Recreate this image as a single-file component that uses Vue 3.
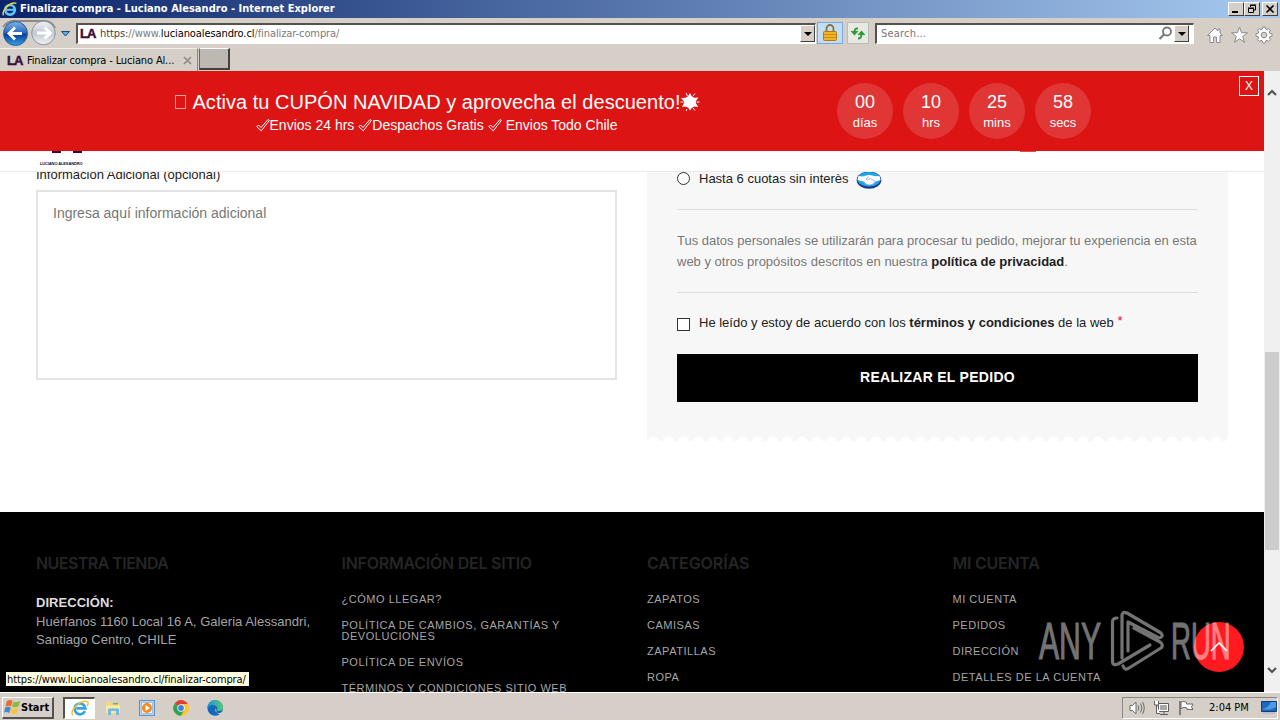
<template>
  <div class="desktop">
    <div class="titlebar">
      <svg class="ie-icon" viewBox="0 0 20 20" width="16" height="16">
        <circle cx="10" cy="11" r="6" fill="none" stroke="#5fc3f5" stroke-width="3.4" />
        <path d="M5 11h11" stroke="#5fc3f5" stroke-width="2.6" />
        <path d="M2 18C-1 13 10 0 18 3" fill="none" stroke="#f5cf3a" stroke-width="1.8" />
      </svg>
      <span class="title">Finalizar compra - Luciano Alesandro - Internet Explorer</span>
      <div class="win-buttons">
        <span class="win-btn">
          <svg width="12" height="10" viewBox="0 0 12 10"><path d="M2 8h6" stroke="#000" stroke-width="2" /></svg>
        </span>
        <span class="win-btn">
          <svg width="12" height="10" viewBox="0 0 12 10">
            <path d="M4.5 3V1.5h5V6H8M4 1h6M2.500 4.500h5V8.500h-5zM2 4h6" fill="none" stroke="#000" />
          </svg>
        </span>
        <span class="win-btn close">
          <svg width="12" height="10" viewBox="0 0 12 10">
            <path d="M2.500 1.500l7 7M9.500 1.500l-7 7" stroke="#000" stroke-width="1.600" />
          </svg>
        </span>
      </div>
    </div>

    <div class="addressbar">
      <svg class="nav-btns" width="76" height="30" viewBox="0 0 76 30">
        <defs>
          <linearGradient id="back" x1="0" y1="0" x2="0" y2="1">
            <stop offset="0" stop-color="#7db4e4" />
            <stop offset=".45" stop-color="#2c6cc0" />
            <stop offset=".55" stop-color="#0c3f95" />
            <stop offset="1" stop-color="#2fa5ec" />
          </linearGradient>
          <linearGradient id="fwd" x1="0" y1="0" x2="0" y2="1">
            <stop offset="0" stop-color="#f4f4f4" />
            <stop offset=".5" stop-color="#c3c8d0" />
            <stop offset="1" stop-color="#eef1f4" />
          </linearGradient>
        </defs>
        <path d="M3 9Q8 2 17 3H44Q52 3 55 10" fill="none" stroke="#8b8b8b" stroke-width="2" />
        <circle cx="43.500" cy="15" r="11.800" fill="url(#fwd)" stroke="#8e959e" />
        <circle cx="15.500" cy="15.500" r="12" fill="url(#back)" stroke="#2e5d9b" />
        <path d="M22 15.500H9.500M15 9.500l-6 6 6 6" fill="none" stroke="#fff" stroke-width="2.800" />
        <path d="M37 15h13M44.500 9.500l6 5.500-6 5.500" fill="none" stroke="#fff" stroke-width="2.800" />
        <path d="M61.500 13.500h8l-4 4.500z" fill="#58b0e8" stroke="#164a80" />
      </svg>
      <div class="url-box">
        <span class="la-icon">LA</span>
        <span class="url"><i class="dark">https:</i>//www.<b>lucianoalesandro.cl</b>/finalizar-compra/</span>
        <span class="drop"><i class="tri"></i></span>
      </div>
      <div class="tool lock">
        <svg width="16" height="18" viewBox="0 0 16 18">
          <path d="M4.500 8V4.500a3.500 3.500 0 0 1 7 0V8" fill="none" stroke="#8a7434" stroke-width="1.800" />
          <rect x="1.500" y="7.500" width="13" height="9" rx="1" fill="#f0b521" stroke="#b07b12" />
          <path d="M2 10.500h12M2 13.500h12" stroke="#c98e15" />
        </svg>
      </div>
      <div class="tool refresh">
        <svg width="16" height="16" viewBox="0 0 16 16">
          <path d="M8 3.500Q4.500 3 4.500 7" fill="none" stroke="#2f9a3c" stroke-width="2" />
          <path d="M.5 6h8l-4 4.500z" fill="#2f9a3c" />
          <path d="M8 13.500Q11.500 13.500 11.500 9" fill="none" stroke="#2f9a3c" stroke-width="2" />
          <path d="M7.500 10h8l-4-4.500z" fill="#2f9a3c" />
        </svg>
      </div>
      <div class="search-box">
        <span class="search-text">Search...</span>
        <svg width="15" height="15" viewBox="0 0 15 15">
          <circle cx="9" cy="5.500" r="4" fill="none" stroke="#777" stroke-width="1.800" />
          <path d="M6 8.500L1.500 13" stroke="#777" stroke-width="2.200" />
        </svg>
        <span class="drop"><i class="tri"></i></span>
      </div>
      <svg class="cmd-icons" width="70" height="20" viewBox="0 0 70 20">
        <g fill="#fff" stroke="#8c8c8c" stroke-linejoin="round">
          <path d="M9 3L1.500 10.500h2.500V17.500h3.500V12h3v5.500H14V10.500h2.500L14 8V4h-2v2z" />
          <path d="M33.500 2l2 5.700 6 .1-4.800 3.600 1.800 5.900-5-3.500-5 3.500 1.800-5.900-4.800-3.600 6-.1z" />
          <path
            d="M56.800 2h2.400l.4 2.100 1.400.6 1.800-1.200 1.700 1.700-1.200 1.800.6 1.400 2.100.4v2.400l-2.100.4-.6 1.400 1.200 1.800-1.700 1.700-1.800-1.200-1.400.6-.4 2.100h-2.400l-.4-2.100-1.400-.6-1.800 1.200-1.700-1.700 1.200-1.800-.6-1.400-2.100-.4V8.800l2.100-.4.6-1.400-1.200-1.800 1.700-1.700L55 4.700l1.400-.6z"
          />
          <circle cx="58" cy="10" r="2.800" fill="#d6d0c8" />
        </g>
      </svg>
    </div>

    <div class="tabs">
      <div class="tab">
        <span class="la-icon">LA</span>
        <span class="tab-title">Finalizar compra - Luciano Al...</span>
        <svg width="9" height="9" viewBox="0 0 9 9"><path d="M1 1l7 7M8 1L1 8" stroke="#8f8b85" stroke-width="1.700" /></svg>
      </div>
      <div class="new-tab"></div>
    </div>

    <div class="viewport">
      <div class="page">
        <div class="promo">
          <div class="promo-text">
            <div class="promo-title">
              <i class="tofu"></i>
              <span>Activa tu CUPÓN NAVIDAD y aprovecha el descuento!</span>
              <svg width="20" height="20" viewBox="0 0 20 20">
                <path
                  d="M10 1l2.600 5 5.900-.6-3.300 4.500 3 5-5.200-.6L10 18.500l-2.800-4.300-5.200.8 2.500-5L1 6l6-.2z"
                  fill="#fff"
                />
                <circle cx="10" cy="10" r="6" fill="#fff" />
                <path d="M6 1l1.500 3M15 1.500L13 4M.5 10h3M19.500 10h-3M6 19l1-2M15 18.500L13 16" stroke="#fff" />
              </svg>
            </div>
            <div class="promo-sub">
              <template v-for="(perk, i) in perks" :key="perk">
                <svg class="check" width="14" height="14" viewBox="0 0 14 14">
                  <path d="M.8 8.800L2.500 7 5 9.500 12 1.500l1.400.9L5.300 12.800z" fill="none" stroke="#fff" />
                </svg>
                <span :class="{ last: i === 2 }">{{ perk }}</span>
              </template>
            </div>
          </div>
          <div class="countdown">
            <div v-for="c in countdown" :key="c.unit" class="count">
              <span class="num">{{ c.value }}</span>
              <span class="unit">{{ c.unit }}</span>
            </div>
          </div>
          <span class="promo-close">X</span>
        </div>

        <div class="site-header">
          <div class="brand">
            <svg width="32" height="3" viewBox="0 0 32 3">
              <path d="M0 0h9v2H0zM21 0h9v2h-9z" fill="#360a33" />
            </svg>
            <span>LUCIANO ALESANDRO</span>
          </div>
          <i class="cart-dot"></i>
        </div>

        <div class="content">
          <div class="checkout">
            <div class="info">
              <label>Informacion Adicional (opcional)</label>
              <div class="textarea">Ingresa aquí información adicional</div>
            </div>
            <div class="order">
              <div class="order-box">
                <div class="pay">
                  <i class="radio"></i>
                  <span class="pay-label">Hasta 6 cuotas sin interès</span>
                  <svg width="26" height="18" viewBox="0 0 26 18">
                    <ellipse cx="13" cy="9.200" rx="12.300" ry="8.600" fill="#1e3c88" />
                    <ellipse cx="13" cy="8.300" rx="11.500" ry="7.300" fill="#20a7ea" />
                    <path d="M2.500 5Q7 6 10 4.500q3-1 6 0 4 1 7.500.5l1 4-5 1.500q-2 3.500-6 3.500t-6-3.500L1.600 9z" fill="#fff" />
                    <path d="M8 11q2.500 3 5.500 3 4 0 5.500-3.500l-4.500-3-3 1.500-1.500-1 3-2.500" fill="none" stroke="#8c98c8" stroke-width=".7" />
                  </svg>
                </div>
                <p class="privacy">
                  <span>Tus datos personales se utilizarán para procesar tu pedido, mejorar tu experiencia en esta</span><br />
                  <span>web y otros propósitos descritos en nuestra <b>política de privacidad</b>.</span>
                </p>
                <div class="terms">
                  <i class="checkbox"></i>
                  <span>He leído y estoy de acuerdo con los <b>términos y condiciones</b> de la web <em>*</em></span>
                </div>
                <button class="place-order">REALIZAR EL PEDIDO</button>
              </div>
              <div class="scallop"></div>
            </div>
          </div>

          <footer class="footer">
            <div class="col">
              <h5>NUESTRA TIENDA</h5>
              <p class="address"><b>DIRECCIÓN:</b><br />Huérfanos 1160 Local 16 A, Galeria Alessandri,<br />Santiago Centro, CHILE</p>
            </div>
            <div v-for="col in footerCols" :key="col.title" class="col">
              <h5>{{ col.title }}</h5>
              <ul>
                <li v-for="link in col.links" :key="link">{{ link }}</li>
              </ul>
            </div>
          </footer>
        </div>

        <span class="to-top"></span>
        <svg class="to-top-arrow" width="20" height="14" viewBox="0 0 20 14">
          <path d="M2 11L10 3l8 8" fill="none" stroke="#fff" stroke-width="1.700" />
        </svg>
        <div class="watermark">
          <span class="wm-text">ANY</span>
          <svg width="56" height="62" viewBox="0 0 56 62">
            <g fill="none" stroke="#fff" stroke-width="3.200" stroke-linejoin="round" stroke-linecap="round">
              <path d="M7 8Q2.500 8 2.500 12V52Q3 56 8 54L40 35" />
              <path d="M12 48V5Q13 1 17 3L51 23Q54 27 49 28L18 12V41" />
              <path d="M13 56Q15 61 19 58L51 38Q54 35 50 32L24 18" />
            </g>
          </svg>
          <span class="wm-text run">RUN</span>
        </div>
        <div class="status">https://www.lucianoalesandro.cl/finalizar-compra/</div>
      </div>

      <div class="scrollbar">
        <svg width="16" height="16" viewBox="0 0 16 16"><path d="M4 10l4-4 4 4" fill="none" stroke="#555" stroke-width="2.200" /></svg>
        <div class="thumb"></div>
        <svg width="16" height="16" viewBox="0 0 16 16"><path d="M4 6l4 4 4-4" fill="none" stroke="#555" stroke-width="2.200" /></svg>
      </div>
    </div>

    <div class="taskbar">
      <div class="start">
        <svg width="17" height="16" viewBox="0 0 17 16">
          <path d="M3 2Q6 0 8.500 2L7 7.500Q4.500 6 1.500 7.500z" fill="#ee6a2c" />
          <path d="M9.500 2.500Q12 4 16 2L14.500 7.500Q11 9 8 7.500z" fill="#86bb40" />
          <path d="M1.300 8.500Q4 7 6.800 8.500L5.300 14Q3 12.500 0 13.500z" fill="#4a86d0" />
          <path d="M7.800 9Q10.500 10.500 14.200 9L12.800 14.200Q9.500 15.500 6.300 14z" fill="#f7c633" />
        </svg>
        <span>Start</span>
      </div>
      <div class="task active">
        <svg width="18" height="18" viewBox="0 0 20 20">
          <path d="M15.500 13.500A6 6 0 1 1 16 10.500H6" fill="none" stroke="#3ba2e0" stroke-width="3" />
          <path d="M2 18C-2 13 11 0 18 3q2 1 0 5" fill="none" stroke="#f2c13a" stroke-width="1.600" />
        </svg>
      </div>
      <div class="task">
        <svg width="16" height="16" viewBox="0 0 16 16">
          <path d="M1 2h5l1 1.500h7V14H1z" fill="#f3d77c" />
          <path d="M1 5.500h14V13H1z" fill="#f9e9a8" />
          <path d="M3 15V9.500q0-1 1-1h9q1 0 1 1V15h-3v-4H6v4z" fill="#6fbbe3" />
          <path d="M8 3h5v1.500H8z" fill="#62b56d" />
        </svg>
      </div>
      <div class="task">
        <svg width="16" height="16" viewBox="0 0 16 16">
          <rect x=".5" y=".5" width="15" height="15" fill="#b7d5f0" stroke="#5d92c4" />
          <rect x="2.500" y="2.500" width="11" height="11" fill="#f5f8fb" stroke="#7aa6cf" stroke-width=".6" />
          <circle cx="8" cy="8" r="5" fill="#f28a1e" />
          <path d="M6.500 5v6l4.500-3z" fill="#fff" />
        </svg>
      </div>
      <div class="task">
        <svg width="16" height="16" viewBox="0 0 16 16">
          <path d="M8 8L1.300 4A7.800 7.800 0 0 1 14.800 4z" fill="#e2402f" />
          <path d="M8 8L1.300 4A7.800 7.800 0 0 0 8 15.800L11.500 10z" fill="#2da44e" />
          <path d="M8 8V4h6.800A7.800 7.800 0 0 1 8 15.800L11.500 10z" fill="#fbc82c" />
          <circle cx="8" cy="8" r="3.700" fill="#fff" />
          <circle cx="8" cy="8" r="2.900" fill="#3f7fe8" />
        </svg>
      </div>
      <div class="task">
        <svg width="17" height="16" viewBox="0 0 17 16">
          <defs>
            <linearGradient id="edge" x1="0" y1="0" x2="1" y2="0">
              <stop offset="0" stop-color="#1e8fdd" />
              <stop offset="1" stop-color="#54ce6c" />
            </linearGradient>
          </defs>
          <circle cx="8.200" cy="8" r="7.800" fill="#1467bb" />
          <path d="M.4 8A7.800 7.800 0 0 1 16 7.500Q16 11 12 11q-2.500 0-2-1.500 1-2-1-3.500Q4 3 .4 8z" fill="url(#edge)" />
          <path d="M9 8q-2 4 2 5 3 .5 4.500-1.500L17 13l-3 1q-5 1-5-6z" fill="#d6d0c8" />
        </svg>
      </div>
      <div class="tray">
        <svg width="16" height="16" viewBox="0 0 16 16" fill="none" stroke="#6b6b6b">
          <path d="M1 5.500h2.500L7 2v12l-3.500-3.500H1z" fill="#fff" />
          <path d="M9 5.500q1.500 2.500 0 5M11.500 3.500q3 4.500 0 9M13.500 2q3.500 6 0 12" />
        </svg>
        <svg width="17" height="16" viewBox="0 0 17 16" fill="none" stroke="#5e5e5e">
          <path d="M5.500 3.500h10v8h-10zM7 14.500h8M11 12v2" fill="#fff" />
          <rect x="7" y="5" width="7" height="5" fill="#a8a8a8" stroke="none" />
          <path d="M1.500 1v4h4V1M3.500 5v8.500H7" fill="#fff" />
        </svg>
        <svg width="17" height="16" viewBox="0 0 17 16">
          <path d="M2 1v14" stroke="#6b6b6b" stroke-width="1.600" />
          <path d="M3 2q3-1.500 5.500.5V4H15l-1.500 3L15 9.500H9V8Q6 6.500 3 8.500z" fill="#fff" stroke="#6b6b6b" />
        </svg>
        <span class="clock">2:04 PM</span>
        <svg width="16" height="13" viewBox="0 0 16 13">
          <path d="M.5.500h15v10H.5z" fill="#2267be" stroke="#113f7d" />
          <path d="M1 8Q7 7 10 1h5v5Q9 10 1 8z" fill="#4d9be6" />
          <path d="M2 12h12" stroke="#9fb3ca" />
        </svg>
      </div>
    </div>
  </div>
</template>

<script setup>
const perks = ['Envios 24 hrs', 'Despachos Gratis', 'Envios Todo Chile'];

const countdown = [
  { value: '00', unit: 'días' },
  { value: '10', unit: 'hrs' },
  { value: '25', unit: 'mins' },
  { value: '58', unit: 'secs' },
];

const footerCols = [
  {
    title: 'INFORMACIÓN DEL SITIO',
    links: [
      '¿CÓMO LLEGAR?',
      'POLÍTICA DE CAMBIOS, GARANTÍAS Y DEVOLUCIONES',
      'POLÍTICA DE ENVÍOS',
      'TÉRMINOS Y CONDICIONES SITIO WEB',
    ],
  },
  { title: 'CATEGORÍAS', links: ['ZAPATOS', 'CAMISAS', 'ZAPATILLAS', 'ROPA'] },
  { title: 'MI CUENTA', links: ['MI CUENTA', 'PEDIDOS', 'DIRECCIÓN', 'DETALLES DE LA CUENTA'] },
];
</script>

<style>
body {
  overflow: hidden;
}
</style>

<style scoped>
* {
  box-sizing: border-box;
}
svg {
  flex: none;
  display: block;
}
i,
em {
  font-style: normal;
}
.desktop {
  width: 1280px;
  height: 720px;
  display: flex;
  flex-direction: column;
  overflow: hidden;
  background: #d5cfc7;
  color: #000;
  font-family: 'DejaVu Sans Condensed', 'DejaVu Sans', sans-serif;
  font-size: 11px;
  white-space: nowrap;
}

/* window chrome */
.titlebar {
  height: 18px;
  flex: none;
  display: flex;
  align-items: center;
  padding: 0 2px;
  background: linear-gradient(90deg, #0a246a, #a6caf0);
  color: #fff;
}
.title {
  flex: 1;
  margin-left: 2px;
  font-weight: bold;
  font-size: 11px;
  line-height: 18px;
  letter-spacing: 0.02px;
}
.win-buttons {
  display: flex;
}
.win-btn {
  width: 16px;
  height: 14px;
  display: flex;
  align-items: center;
  justify-content: center;
  background: #d5cfc7;
  border: 1px solid;
  border-color: #fff #404040 #404040 #fff;
}
.win-btn.close {
  margin-left: 2px;
}
.addressbar {
  height: 30px;
  flex: none;
  display: flex;
  align-items: center;
}
.url-box,
.search-box {
  height: 21px;
  display: flex;
  align-items: center;
  background: #fff;
  border: 1px solid;
  border-width: 2px 1px 1px 2px;
  border-color: #55524e #fff #fff #55524e;
}
.url-box {
  width: 740px;
  padding-left: 2px;
}
.la-icon {
  width: 16px;
  color: #3b0e3b;
  font-family: 'Liberation Sans', Arial, sans-serif;
  font-weight: bold;
  font-size: 13px;
  letter-spacing: -1px;
  -webkit-text-stroke: 0.5px #3b0e3b;
}
.url {
  flex: 1;
  margin-left: 4px;
  color: #7b7b7b;
  letter-spacing: -0.09px;
}
.url b {
  color: #000;
  font-weight: normal;
}
.dark {
  color: #444;
}
.drop {
  width: 15px;
  height: 17px;
  display: flex;
  align-items: center;
  justify-content: center;
  background: #d5cfc7;
  border: 1px solid;
  border-color: #fff #404040 #404040 #fff;
}
.tri {
  border: 4px solid transparent;
  border-top-color: #000;
  border-bottom: 0;
}
.tool {
  display: flex;
  align-items: center;
  justify-content: center;
  height: 22px;
}
.lock {
  width: 26px;
  margin-left: 1px;
  background: #c3dcf7;
  border: 1px solid #7aa9e0;
}
.refresh {
  width: 22px;
  margin-left: 4px;
  background: #e9e9e4;
  border: 1px solid #b9bcb8;
}
.search-box {
  width: 319px;
  margin-left: 6px;
  padding: 0 4px 0 4px;
}
.search-text {
  flex: 1;
  color: #767676;
  letter-spacing: 0.2px;
}
.search-box .drop {
  margin-left: 1px;
}
.cmd-icons {
  margin: 4px 0 0 12px;
}
.tabs {
  height: 23px;
  flex: none;
  display: flex;
}
.tab {
  width: 198px;
  display: flex;
  align-items: center;
  padding-left: 7px;
  border-top: 1px solid #f3f0ec;
  border-right: 1px solid #8c877f;
}
.tab-title {
  width: 156px;
  margin-left: 4px;
  letter-spacing: -0.14px;
}
.new-tab {
  width: 31px;
  height: 22px;
  margin-left: 1px;
  background: #bdb8b1;
  border: 1px solid;
  border-width: 1px 2px 2px 1px;
  border-color: #fff #45423e #45423e #6a665f;
}

/* web page */
.viewport {
  height: 621px;
  flex: none;
  display: flex;
  background: #fff;
}
.page {
  position: relative;
  width: 1264px;
  overflow: hidden;
  display: flex;
  flex-direction: column;
  font-family: 'Liberation Sans', Arial, sans-serif;
}
.promo {
  position: relative;
  height: 80px;
  flex: none;
  display: flex;
  align-items: center;
  background: #dd1414;
  color: #fff;
}
.promo-text {
  width: 837px;
  padding: 3px 0 0 38px;
}
.promo-title {
  display: flex;
  align-items: center;
  justify-content: center;
  height: 24px;
  padding-top: 1px;
  font-size: 20px;
  letter-spacing: 0.03px;
}
.tofu {
  width: 11px;
  height: 14px;
  margin-right: 7px;
  border: 1px solid #f2a0a0;
}
.promo-sub {
  display: flex;
  align-items: center;
  justify-content: center;
  height: 22px;
  padding-right: 2px;
  font-size: 14px;
}
.promo-sub span {
  margin-right: 4px;
}
.promo-sub .last {
  margin: 0 0 0 4px;
}
.countdown {
  display: flex;
  gap: 10px;
}
.count {
  width: 56px;
  height: 56px;
  display: flex;
  flex-direction: column;
  align-items: center;
  border-radius: 50%;
  background: #e03636;
}
.num {
  margin-top: 8px;
  font-size: 18px;
  line-height: 22px;
}
.unit {
  font-size: 13px;
  line-height: 20px;
}
.promo-close {
  position: absolute;
  top: 5px;
  right: 5px;
  width: 20px;
  height: 20px;
  border: 1px solid #fff;
  font-size: 12px;
  line-height: 18px;
  text-align: center;
}
.site-header {
  height: 21px;
  flex: none;
  display: flex;
  justify-content: space-between;
  border-bottom: 1px solid #e9e9e9;
}
.brand {
  margin-left: 40px;
  width: 43px;
  color: #1d0a1c;
}
.brand svg {
  margin-left: 12px;
}
.brand span {
  display: block;
  margin-top: 7px;
  font-size: 4px;
  font-weight: bold;
  line-height: 5px;
  letter-spacing: -0.12px;
}
.cart-dot {
  width: 16px;
  height: 1px;
  margin-right: 228px;
  background: #df4a4a;
}
.content {
  flex: 1;
  min-height: 0;
  overflow: hidden;
}
.checkout {
  height: 340px;
  display: flex;
  gap: 30px;
  padding: 0 36px;
}
.info,
.order {
  width: 581px;
}
.info label {
  display: block;
  margin-top: -7px;
  font-size: 13px;
  line-height: 20px;
  color: #222;
}
.textarea {
  height: 190px;
  margin-top: 5px;
  padding: 11px 15px;
  border: 2px solid #e4e4e4;
  color: #777;
  font-size: 14px;
  line-height: 20px;
}
.order-box {
  height: 264px;
  padding: 0 30px;
  background: #f7f7f7;
  color: #777;
  font-size: 13px;
}
.pay {
  height: 38px;
  display: flex;
  align-items: flex-start;
  border-bottom: 1px solid #dedede;
  color: #222;
}
.radio {
  width: 13px;
  height: 13px;
  border: 1px solid #333;
  border-radius: 50%;
  background: #fff;
}
.pay-label {
  width: 157px;
  margin-left: 9px;
  line-height: 14px;
}
.pay svg {
  margin-top: -1px;
}
.privacy {
  height: 83px;
  margin: 0;
  padding-top: 20px;
  border-bottom: 1px solid #dedede;
  line-height: 21px;
}
.privacy b,
.terms b {
  color: #222;
}
.terms {
  display: flex;
  margin-top: 19px;
  color: #222;
  line-height: 21px;
}
.checkbox {
  width: 13px;
  height: 13px;
  margin: 6px 9px 0 0;
  border: 1px solid #333;
  background: #fff;
}
.terms em {
  position: relative;
  top: -2px;
  color: #e01020;
}
.place-order {
  display: block;
  width: 521px;
  height: 48px;
  margin-top: 21px;
  padding: 0 0 2px;
  border: 0;
  background: #000;
  color: #fff;
  font-family: inherit;
  font-size: 14px;
  font-weight: bold;
  letter-spacing: 0.28px;
}
.scallop {
  height: 5px;
  background: radial-gradient(circle at 7px 6px, #fff 5px, #f7f7f7 6px) 0 0 / 14.8px 5px;
}
.footer {
  height: 200px;
  display: grid;
  grid-template-columns: repeat(4, 275.5px);
  gap: 30px;
  padding: 40px 36px 0;
  background: #000;
  color: #a5a5a5;
}
.footer h5 {
  margin: 0;
  color: #252525;
  font-family: Inter, 'Open Sans', sans-serif;
  font-size: 16px;
  font-weight: 600;
  line-height: 22px;
  letter-spacing: -0.25px;
}
.footer .col:first-child h5 {
  letter-spacing: -0.55px;
}
.footer .col:nth-child(3) h5 {
  letter-spacing: -0.05px;
}
.address {
  margin: 20px 0 0;
  font-size: 13px;
  line-height: 18.5px;
  letter-spacing: 0.04px;
}
.address b {
  color: #ddd;
}
.footer ul {
  margin: 20px 0 0;
  padding: 0;
  list-style: none;
}
.footer li {
  margin-bottom: 15px;
  font-size: 11px;
  line-height: 11px;
  letter-spacing: 0.53px;
  white-space: normal;
}

/* floating pieces */
.to-top {
  position: absolute;
  left: 1194px;
  top: 551px;
  width: 50px;
  height: 50px;
  border-radius: 50%;
  background: #fe1a1e;
}
.to-top-arrow {
  position: absolute;
  left: 1209px;
  top: 569px;
}
.watermark {
  position: absolute;
  left: 1039px;
  top: 539px;
  display: flex;
  align-items: center;
  gap: 8px;
  opacity: 0.45;
  color: #fff;
}
.wm-text {
  width: 63px;
  height: 62px;
  font-size: 52px;
  line-height: 62px;
  transform: scaleX(0.58);
  transform-origin: 0 50%;
  -webkit-text-stroke: 1px #fff;
}
.wm-text.run {
  margin-left: -3px;
  transform: scaleX(0.53);
}
.status {
  position: absolute;
  left: 6px;
  bottom: 6px;
  height: 14px;
  width: 243px;
  padding-left: 1px;
  background: #ffffe1;
  color: #000;
  font-family: 'DejaVu Sans Condensed', 'DejaVu Sans', sans-serif;
  font-size: 11px;
  line-height: 15px;
  letter-spacing: -0.1px;
}
.scrollbar {
  width: 16px;
  display: flex;
  flex-direction: column;
  justify-content: space-between;
  padding: 14px 0;
  background: #f0f0f0;
}
.thumb {
  height: 198px;
  margin: 251px 1px 112px;
  background: #cdcdcd;
}

/* taskbar */
.taskbar {
  height: 28px;
  flex: none;
  display: flex;
  align-items: center;
  padding: 2px 2px 0;
  border-top: 1px solid #fff;
}
.start {
  width: 52px;
  height: 22px;
  display: flex;
  align-items: center;
  padding-left: 1px;
  border: 1px solid;
  border-width: 1px 2px 2px 1px;
  border-color: #fff #55524e #55524e #fff;
  font-weight: bold;
}
.task {
  width: 32px;
  height: 22px;
  display: flex;
  align-items: center;
  justify-content: center;
  margin-right: 2px;
}
.task.active {
  margin-left: 9px;
  background: #fff;
  border: 1px solid;
  border-width: 2px 1px 1px 2px;
  border-color: #55524e #fff #fff #55524e;
}
.tray {
  width: 156px;
  height: 22px;
  display: flex;
  align-items: center;
  gap: 8px;
  margin-left: auto;
  padding-left: 6px;
  border: 1px solid;
  border-color: #8c877f #fff #fff #8c877f;
}
.clock {
  width: 45px;
  margin-left: 6px;
}
</style>
